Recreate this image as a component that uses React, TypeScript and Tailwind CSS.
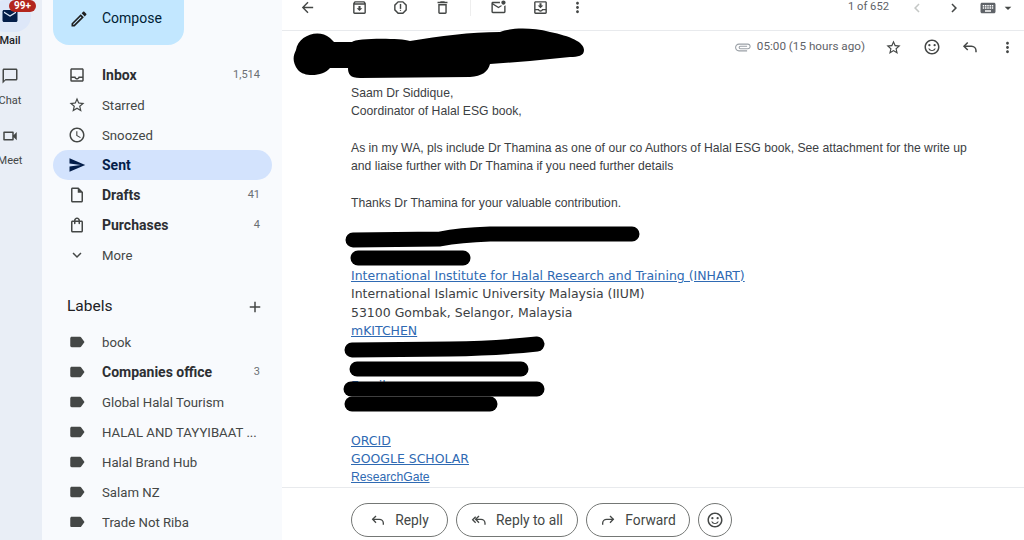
import React from 'react';
import {
  MdAdd,
  MdArrowBack,
  MdArrowDropDown,
  MdChevronLeft,
  MdChevronRight,
  MdExpandMore,
  MdKeyboard,
  MdLabel,
  MdMoreVert,
  MdOutlineAccessTime,
  MdOutlineAttachment,
  MdOutlineChatBubbleOutline,
  MdOutlineCreate,
  MdOutlineDelete,
  MdOutlineInbox,
  MdOutlineInsertDriveFile,
  MdOutlineMarkEmailUnread,
  MdOutlineMoveToInbox,
  MdOutlineReport,
  MdOutlineSentimentSatisfiedAlt,
  MdOutlineShoppingBag,
  MdOutlineStarBorder,
  MdOutlineVideocam,
  MdSend,
  MdMail,
  MdOutlineArchive,
} from 'react-icons/md';

const ReplyIcon = ({ className }: { className?: string }) => (
  <svg className={className} viewBox="0 0 24 24" fill="none" stroke="currentColor" strokeWidth="2">
    <path d="M9 6L4 11l5 5" />
    <path d="M4 11h10a6 6 0 0 1 6 6v2" />
  </svg>
);

const ReplyAllIcon = ({ className }: { className?: string }) => (
  <svg className={className} viewBox="0 0 24 24" fill="none" stroke="currentColor" strokeWidth="2">
    <path d="M7 7L2.5 11.5 7 16" />
    <path d="M12 6L7 11l5 5" />
    <path d="M7 11h8a6 6 0 0 1 6 6v2" />
  </svg>
);

const navItems = [
  { name: 'Inbox', icon: MdOutlineInbox, count: '1,514', bold: true },
  { name: 'Starred', icon: MdOutlineStarBorder },
  { name: 'Snoozed', icon: MdOutlineAccessTime },
  { name: 'Sent', icon: MdSend, bold: true, active: true },
  { name: 'Drafts', icon: MdOutlineInsertDriveFile, count: '41', bold: true },
  { name: 'Purchases', icon: MdOutlineShoppingBag, count: '4', bold: true },
  { name: 'More', icon: MdExpandMore },
];

const labels = [
  { name: 'book' },
  { name: 'Companies office', count: '3', bold: true },
  { name: 'Global Halal Tourism' },
  { name: 'HALAL AND TAYYIBAAT ...' },
  { name: 'Halal Brand Hub' },
  { name: 'Salam NZ' },
  { name: 'Trade Not Riba' },
];

const SideRow = ({ item }: { item: any }) => {
  const Icon = item.icon || MdLabel;
  return (
    <div
      className={`flex h-[30px] w-[219px] shrink-0 items-center rounded-full pl-[15px] pr-[12px] ${
        item.active ? 'bg-[#d3e3fd]' : ''
      }`}
    >
      <Icon className={`h-[18px] w-[18px] ${item.active ? 'text-[#041e49]' : 'text-[#444746]'}`} />
      <span
        className={`ml-[16px] flex-1 truncate ${
          item.bold ? 'pt-[1px] text-[14px] font-bold' : 'pt-[2px] text-[13.2px]'
        } ${item.active ? 'text-[#041e49]' : item.bold ? 'text-[#2d2f33]' : 'text-[#444746]'}`}
      >
        {item.name}
      </span>
      {item.count && <span className="text-[11px] text-[#6b6f73]">{item.count}</span>}
    </div>
  );
};

const RailItem = ({ icon: Icon, label, active }: { icon: any; label: string; active?: boolean }) => (
  <div className="flex h-[60px] w-[42px] shrink-0 flex-col items-center">
    <div className={`relative flex h-[32px] w-[42px] items-center justify-center rounded-full ${active ? 'bg-[#dde7f8]' : ''}`}>
      <Icon className={`h-[18px] w-[18px] ${active ? 'text-[#041e49]' : 'text-[#444746]'}`} />
      {active && (
        <span className="absolute left-[20px] top-0 rounded-full bg-[#b3261e] px-[5px] text-[10px] font-bold leading-[12px] text-white">
          99+
        </span>
      )}
    </div>
    <span className={`text-[11px] leading-[18px] ${active ? 'font-medium text-[#202124]' : 'text-[#444746]'}`}>{label}</span>
  </div>
);

const ToolIcon = ({ icon: Icon, className }: { icon: any; className: string }) => (
  <Icon className={`h-[17px] w-[17px] shrink-0 text-[#444746] ${className}`} />
);

const ReplyButton = ({ icon: Icon, label, width, flip }: { icon: any; label: string; width: string; flip?: boolean }) => (
  <button className={`flex h-[34px] items-center justify-center gap-[9px] rounded-full border border-[#747775] text-[13.8px] text-[#444746] ${width}`}>
    <Icon className={`h-[16px] w-[16px] text-[#444746] ${flip ? '-scale-x-100' : ''}`} />
    {label}
  </button>
);

const Line = ({ children }: { children?: React.ReactNode }) => <div className="h-[18.3px] whitespace-nowrap">{children || '\u00a0'}</div>;

const A = ({ children }: { children: React.ReactNode }) => <a className="text-[#2f6ab3] underline">{children}</a>;

export default function App() {
  return (
    <div className="relative flex h-[540px] w-[1024px] overflow-hidden bg-white font-['Roboto',sans-serif]">
      <div className="w-[42px] shrink-0 overflow-hidden bg-[#e9eef6]">
        <div className="-ml-[11px] flex flex-col">
          <RailItem icon={MdMail} label="Mail" active />
          <RailItem icon={MdOutlineChatBubbleOutline} label="Chat" />
          <RailItem icon={MdOutlineVideocam} label="Meet" />
        </div>
      </div>

      <div className="flex w-[240px] shrink-0 flex-col bg-[#f8fafd] pl-[11px]">
        <div className="flex h-[45px] w-[131px] shrink-0 items-center rounded-b-[16px] bg-[#c2e7ff] pb-[8px] pl-[16px]">
          <MdOutlineCreate className="h-[20px] w-[20px] text-[#1f1f1f]" />
          <span className="ml-[13px] text-[14px] text-[#001d35]">Compose</span>
        </div>
        <div className="mt-[15px] flex flex-col">
          {navItems.map((item) => (
            <SideRow key={item.name} item={item} />
          ))}
        </div>
        <div className="mt-[22px] flex h-[30px] w-[219px] shrink-0 items-center justify-between pl-[14px] pr-[8px]">
          <span className="text-[15.5px] text-[#202124]">Labels</span>
          <MdAdd className="h-[18px] w-[18px] text-[#444746]" />
        </div>
        <div className="mt-[5px] flex h-[200px] flex-col overflow-hidden">
          {labels.map((item) => (
            <SideRow key={item.name} item={item} />
          ))}
        </div>
      </div>

      <div className="flex min-w-0 flex-1 flex-col">
        <div className="box-border flex h-[31px] shrink-0 items-center border-b border-[#e8eaed] pb-[15px] pl-[17px]">
          <ToolIcon icon={MdArrowBack} className="" />
          <ToolIcon icon={MdOutlineArchive} className="ml-[35px]" />
          <ToolIcon icon={MdOutlineReport} className="ml-[24px]" />
          <ToolIcon icon={MdOutlineDelete} className="ml-[25px]" />
          <div className="ml-[19px] h-[16px] w-px bg-[#eeeeee]" />
          <ToolIcon icon={MdOutlineMarkEmailUnread} className="ml-[19px]" />
          <ToolIcon icon={MdOutlineMoveToInbox} className="ml-[25px]" />
          <ToolIcon icon={MdMoreVert} className="ml-[20px]" />
          <span className="ml-auto text-[11.2px] text-[#5f6368]">1 of 652</span>
          <MdChevronLeft className="ml-[19px] h-[18px] w-[18px] text-[#c4c7c5]" />
          <MdChevronRight className="ml-[19px] h-[18px] w-[18px] text-[#444746]" />
          <MdKeyboard className="ml-[16px] h-[18px] w-[18px] text-[#5f6368]" />
          <MdArrowDropDown className="ml-[3px] mr-[8px] h-[16px] w-[16px] text-[#444746]" />
        </div>

        <div className="box-border flex h-[53px] shrink-0 items-center justify-end pb-[21px] pr-[8px]">
          <MdOutlineAttachment className="h-[17px] w-[17px] text-[#9aa0a6]" />
          <span className="ml-[6px] text-[11.7px] text-[#5f6368]">05:00 (15 hours ago)</span>
          <MdOutlineStarBorder className="ml-[20px] h-[17px] w-[17px] text-[#444746]" />
          <MdOutlineSentimentSatisfiedAlt className="ml-[21px] h-[18px] w-[18px] text-[#444746]" />
          <ReplyIcon className="ml-[20px] h-[18px] w-[18px] text-[#444746]" />
          <MdMoreVert className="ml-[20px] h-[17px] w-[17px] text-[#444746]" />
        </div>

        <div className="min-h-0 flex-1 overflow-hidden pl-[69px] font-['Liberation_Sans',Arial,sans-serif] text-[12.2px] leading-[18.3px] text-[#3c4043]">
          <Line>Saam Dr Siddique,</Line>
          <Line>Coordinator of Halal ESG book,</Line>
          <Line />
          <Line>As in my WA, pls include Dr Thamina as one of our co Authors of Halal ESG book, See attachment for the write up</Line>
          <Line>and liaise further with Dr Thamina if you need further details</Line>
          <Line />
          <Line>Thanks Dr Thamina for your valuable contribution.</Line>
          <Line />
          <Line />
          <Line />
          <div className="font-['DejaVu_Sans',sans-serif] text-[12.47px] text-[#3c4043]">
            <Line><A>International Institute for Halal Research and Training (INHART)</A></Line>
            <Line>International Islamic University Malaysia (IIUM)</Line>
            <Line>53100 Gombak, Selangor, Malaysia</Line>
            <Line><A>mKITCHEN</A></Line>
            <Line />
            <Line />
            <Line><span className="text-[#2f6ab3]">Email:</span></Line>
            <Line />
            <Line />
            <Line><A>ORCID</A></Line>
            <Line><A>GOOGLE SCHOLAR</A></Line>
          </div>
          <Line><A>ResearchGate</A></Line>
        </div>

        <div className="box-border flex h-[53px] shrink-0 items-start gap-[8px] border-t border-[#e8eaed] pl-[69px] pt-[15px]">
          <ReplyButton icon={ReplyIcon} label="Reply" width="w-[97px]" />
          <ReplyButton icon={ReplyAllIcon} label="Reply to all" width="w-[122px]" />
          <ReplyButton icon={ReplyIcon} label="Forward" width="w-[104px]" flip />
          <button className="flex h-[34px] w-[34px] items-center justify-center rounded-full border border-[#747775]">
            <MdOutlineSentimentSatisfiedAlt className="h-[18px] w-[18px] text-[#444746]" />
          </button>
        </div>
      </div>

      {/* black marker strokes over the sender and signature */}
      <svg className="pointer-events-none absolute inset-0" width="1024" height="540" viewBox="0 0 1024 540">
        <path
          d="M296 50C298 36 318 28 330 38L334 42L352 42C356 38 400 38 410 41C440 36 470 32 500 32C510 28 530 27 550 32C570 36 584 42 584 50C584 56 578 57 570 57L530 61L490 64C488 72 482 76 470 77L360 78C350 78 348 74 348 68L330 68C324 76 305 78 298 70C292 62 293 56 296 50Z"
          fill="#000"
        />
        <g fill="none" stroke="#000" strokeWidth="15" strokeLinecap="round" strokeLinejoin="round">
          <path d="M353 240L440 239Q460 235 490 234L632 234" />
          <path d="M358 258L463 258" />
          <path d="M352 350L450 349Q500 348 537 344" />
          <path d="M357 369L521 369" />
          <path d="M351 389L537 389" />
          <path d="M352 404L490 404" />
        </g>
      </svg>
    </div>
  );
}
